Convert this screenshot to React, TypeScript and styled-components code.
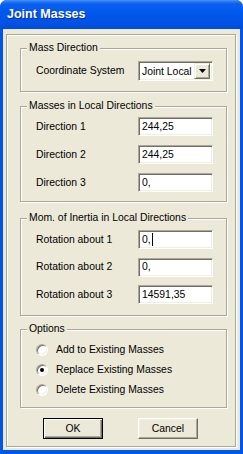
import React from 'react';
import styled, { createGlobalStyle } from 'styled-components';

const Global = createGlobalStyle`
  html, body { margin: 0; padding: 0; background: #ffffff; }
  body { font-family: "Liberation Sans", Arial, sans-serif; }
  * { box-sizing: border-box; }
`;

const Window = styled.div`
  width: 243px;
  height: 454px;
  display: flex;
  flex-direction: column;
  background: #0055ea;
  border-radius: 7px 7px 0 0;
  overflow: hidden;
`;

const TitleBar = styled.div`
  height: 29px;
  flex: none;
  display: flex;
  align-items: center;
  padding: 0 0 1px 7px;
  background: linear-gradient(
    to bottom,
    #4a95f6 0px,
    #2372f2 2px,
    #0a60ef 4px,
    #0058ec 45%,
    #0051e3 85%,
    #004bd9 100%
  );
  color: #ffffff;
  font-weight: bold;
  font-size: 12.5px;
  text-shadow: 1px 1px #0c2b8f;
`;

const Body = styled.div`
  flex: 1;
  display: flex;
  margin: 0 3px 4px 3px;
  padding: 5px 4px 3px 3px;
  background: #ece9d8;
  font-size: 10.4px;
  color: #000000;
`;

const Frame = styled.div`
  flex: 1;
  display: flex;
  flex-direction: column;
  padding: 0 0 0 13px;
  border: 1px solid #aca899;
  box-shadow: inset 1px 1px #ffffff, 1px 1px #ffffff;
`;

const GroupBox = styled.div<{ $h: number; $top: number; $pt: number; $gap: number }>`
  position: relative;
  width: 207px;
  height: ${(p) => p.$h}px;
  margin-top: ${(p) => p.$top}px;
  padding: ${(p) => p.$pt}px 0 0 15px;
  display: flex;
  flex-direction: column;
  gap: ${(p) => p.$gap}px;
  border: 1px solid #aca899;
  box-shadow: inset 1px 1px #ffffff, 1px 1px #ffffff;
`;

const Legend = styled.span`
  position: absolute;
  left: 6px;
  top: -7px;
  padding: 0 2px;
  line-height: 12px;
  background: #ece9d8;
  white-space: nowrap;
`;

const Row = styled.div<{ $h: number }>`
  display: grid;
  grid-template-columns: 102px 75px;
  align-items: center;
  height: ${(p) => p.$h}px;
`;

const Label = styled.span`
  white-space: nowrap;
  line-height: 12px;
`;

const Edit = styled.div`
  height: 19px;
  display: flex;
  align-items: center;
  padding: 0 0 1px 3px;
  background: #ffffff;
  border: 1px solid;
  border-color: #aca899 #ffffff #ffffff #aca899;
  box-shadow: inset 1px 1px #716f64, inset -1px -1px #f1efe2;
  white-space: nowrap;
`;

const Caret = styled.span`
  display: inline-block;
  width: 1px;
  height: 13px;
  margin-left: 1px;
  background: #000000;
`;

const Combo = styled(Edit)`
  height: 20px;
  padding: 0 2px 0 3px;
  justify-content: space-between;
`;

const DropButton = styled.span`
  width: 16px;
  height: 16px;
  display: flex;
  align-items: center;
  justify-content: center;
  background: #ece9d8;
  border: 1px solid;
  border-color: #f1efe2 #716f64 #716f64 #f1efe2;
  box-shadow: inset 1px 1px #ffffff, inset -1px -1px #aca899;
`;

const RadioRow = styled.label`
  display: flex;
  align-items: center;
  gap: 8px;
  height: 20px;
  line-height: 12px;
`;

const RadioCircle = styled.span<{ $on: boolean }>`
  width: 12px;
  height: 12px;
  flex: none;
  display: flex;
  align-items: center;
  justify-content: center;
  border-radius: 50%;
  background: #ffffff;
  border: 1px solid;
  border-color: #aca899 #ffffff #ffffff #aca899;
  box-shadow: inset 1px 1px #716f64, inset -1px -1px #f1efe2;
  &::after {
    content: '';
    width: 4px;
    height: 4px;
    border-radius: 50%;
    background: ${(p) => (p.$on ? '#000000' : 'transparent')};
  }
`;

const ButtonRow = styled.div`
  display: flex;
  gap: 35px;
  margin: 10px 0 0 23px;
`;

const Button = styled.button<{ $default?: boolean }>`
  width: 60px;
  height: 21px;
  padding: 0 0 1px 0;
  font: inherit;
  color: #000000;
  background: #ece9d8;
  border: 1px solid;
  border-color: ${(p) => (p.$default ? '#000000' : '#ffffff #716f64 #716f64 #ffffff')};
  box-shadow: ${(p) =>
    p.$default
      ? 'inset 1px 1px #ffffff, inset -1px -1px #716f64, inset -2px -2px #aca899'
      : 'inset -1px -1px #aca899, inset 1px 1px #f1efe2'};
`;

const Arrow = () => (
  <svg width="7" height="4" viewBox="0 0 7 4">
    <path d="M0 0h7L3.5 4z" fill="#000" />
  </svg>
);

export default function App() {
  return (
    <>
      <Global />
      <Window>
        <TitleBar>Joint Masses</TitleBar>
        <Body>
          <Frame>
            <GroupBox $h={44} $top={13} $pt={12} $gap={0}>
              <Legend>Mass Direction</Legend>
              <Row $h={20}>
                <Label>Coordinate System</Label>
                <Combo>
                  <span>Joint Local</span>
                  <DropButton>
                    <Arrow />
                  </DropButton>
                </Combo>
              </Row>
            </GroupBox>

            <GroupBox $h={96} $top={14} $pt={10} $gap={9}>
              <Legend>Masses in Local Directions</Legend>
              <Row $h={19}>
                <Label>Direction 1</Label>
                <Edit>244,25</Edit>
              </Row>
              <Row $h={19}>
                <Label>Direction 2</Label>
                <Edit>244,25</Edit>
              </Row>
              <Row $h={19}>
                <Label>Direction 3</Label>
                <Edit>0,</Edit>
              </Row>
            </GroupBox>

            <GroupBox $h={98} $top={16} $pt={11} $gap={8.5}>
              <Legend>Mom. of Inertia in Local Directions</Legend>
              <Row $h={19}>
                <Label>Rotation about 1</Label>
                <Edit>
                  0,
                  <Caret />
                </Edit>
              </Row>
              <Row $h={19}>
                <Label>Rotation about 2</Label>
                <Edit>0,</Edit>
              </Row>
              <Row $h={19}>
                <Label>Rotation about 3</Label>
                <Edit>14591,35</Edit>
              </Row>
            </GroupBox>

            <GroupBox $h={79} $top={13} $pt={10} $gap={0}>
              <Legend>Options</Legend>
              <RadioRow>
                <RadioCircle $on={false} />
                Add to Existing Masses
              </RadioRow>
              <RadioRow>
                <RadioCircle $on={true} />
                Replace Existing Masses
              </RadioRow>
              <RadioRow>
                <RadioCircle $on={false} />
                Delete Existing Masses
              </RadioRow>
            </GroupBox>

            <ButtonRow>
              <Button $default>OK</Button>
              <Button>Cancel</Button>
            </ButtonRow>
          </Frame>
        </Body>
      </Window>
    </>
  );
}
